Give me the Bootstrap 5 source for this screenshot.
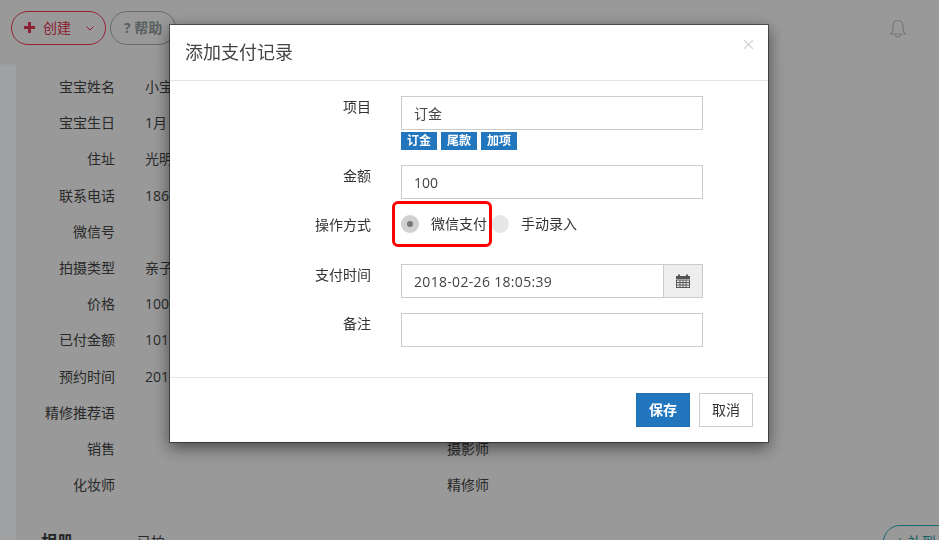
<!DOCTYPE html>
<html lang="zh-CN">
<head>
<meta charset="utf-8">
<title>添加支付记录</title>
<link rel="stylesheet" href="https://cdn.jsdelivr.net/npm/bootstrap@5.3.0/dist/css/bootstrap.min.css">
<style>
html, body { height: 100%; overflow: hidden; }
body { font-family: "Open Sans", "Noto Sans CJK SC", sans-serif; font-size: 14px; color: #333; background: #e5e7e9; }
.top-strip { height: 62px; background: #dcdcdc; padding: 11px 31px 0 11px; box-shadow: 0 1px 4px rgba(0,0,0,.12); position: relative; }
.pill { height: 34px; border-radius: 17px; background: transparent; display: flex; align-items: center; font-size: 14px; border: 1px solid; padding-bottom: 2px; }
.pill-create { width: 95px; border-color: #d5344f; color: #c8304a; padding-left: 12px; }
.pill-help { width: 66px; margin-left: 4px; border-color: #8e9a9a; color: #7f8a8a; padding-left: 13px; font-weight: 700; }
.pill-create .txt { margin-left: 8px; }
.pill-create svg.chev { margin-left: 15px; margin-top: 2px; }
.bell { margin-left: auto; margin-top: 8px; align-self: flex-start; }
.main-area { margin-left: 16px; background: #dbdbdb; height: 478px; position: relative; padding-top: 7px; color: #3c3c3c; }
.info-row { height: 36.2px; line-height: 36px; }
.info-key { width: 99px; text-align: right; flex: none; }
.info-val { margin-left: 30px; width: 100px; white-space: nowrap; }
.info-key2 { width: 143px; margin-left: 101px; text-align: right; flex: none; }
.album-row { position: relative; margin-top: 27px; }
.album-head { font-weight: 700; font-size: 16px; margin-left: 25px; color: #333; line-height: 22px; }
.album-sub { margin-left: 64px; line-height: 24px; }
.pill-teal { position: absolute; left: 867px; top: -5px; width: 80px; height: 34px; border: 1px solid #1f9aa0; border-radius: 17px; color: #1f8a90; padding: 0 12px; line-height: 32px; white-space: nowrap; }
.modal-backdrop-dim { background: rgba(0,0,0,.3); z-index: 1050; position: fixed; inset: 0; }
.pay-modal { z-index: 1055; overflow: hidden; }
.pay-dialog { width: 600px; max-width: 600px; margin: 24px 0 0 169px; }
.pay-content { border-radius: 0; border: 1px solid rgba(0,0,0,.45); box-shadow: 0 5px 15px rgba(0,0,0,.5); position: relative; color: #333; }
.pay-header { padding: 15px; height: 56px; border-bottom: 1px solid #e5e5e5; border-radius: 0; display: block; }
.pay-title { font-size: 18px; line-height: 25px; font-weight: 400; margin: 0; color: #444; }
.pay-close { position: absolute; right: 15px; top: 15px; font-size: 9px; width: 1em; height: 1em; padding: 0; opacity: .2; background-size: 1em; margin: 0; }
.pay-body { padding: 15px; }
.field-row { display: flex; margin-bottom: 15px; }
.field-label { width: 186px; flex: none; text-align: right; padding-top: 1px; line-height: 20px; margin: 0; }
.field-ctl { width: 302px; margin-left: 30px; flex: none; }
.pay-input { height: 34px; border: 1px solid #ccc; border-radius: 0; padding: 6px 12px; font-size: 14px; color: #444; box-shadow: none; }
.date-input { letter-spacing: .32px; }
.tag-list { display: flex; gap: 4px; margin-top: 2px; }
.tag-item { width: 36px; height: 18px; background: #2176bd; color: #fff; font-size: 12px; font-weight: 700; text-align: center; line-height: 18px; }
.radio-row { display: flex; align-items: center; height: 20px; margin-bottom: 15px; }
.radio-mark { width: 18px; height: 18px; border-radius: 50%; background: #e6e6e6; flex: none; display: flex; align-items: center; justify-content: center; }
.radio-on { background: #d0d0d0; }
.radio-on::after { content: ""; width: 6px; height: 6px; border-radius: 50%; background: #777; }
.radio-text { margin-left: 12px; white-space: nowrap; line-height: 20px; }
.radio-text.first { width: 60px; }
.date-group { height: 34px; }
.date-addon { width: 40px; padding: 0; justify-content: center; background: #eee; border: 1px solid #ccc; border-radius: 0; }
.pay-footer { padding: 15px; border-top: 1px solid #e5e5e5; border-radius: 0; gap: 9px; justify-content: flex-end; }
.pay-footer .btn { margin: 0; width: 54px; height: 34px; padding: 0; font-size: 14px; border-radius: 0; line-height: 32px; }
.btn-save { background: #2176bd; border: 1px solid #1f6fb2; color: #fff; font-weight: 700; }
.btn-cancel { background: #fff; border: 1px solid #ccc; color: #333; }
.red-note { position: absolute; left: 222px; top: 176px; width: 100px; height: 46px; border: 3px solid #f00; border-radius: 6px; pointer-events: none; }
</style>
</head>
<body>
<div class="top-strip d-flex">
  <div class="pill pill-create">
    <svg width="11" height="11" viewBox="0 0 11 11" aria-hidden="true"><path d="M4 0h3v4h4v3H7v4H4V7H0V4h4z" fill="#c8304a"/></svg>
    <span class="txt">创建</span>
    <svg class="chev" width="8" height="5" viewBox="0 0 8 5" aria-hidden="true"><path d="M.5.5 4 4 7.500.5" fill="none" stroke="#c8304a" stroke-width="1"/></svg>
  </div>
  <div class="pill pill-help">? 帮助</div>
  <svg class="bell" width="20" height="20" viewBox="0 0 20 20" aria-hidden="true"><path d="M10 1.500c-3.200 0-5 2.500-5 5.500v3.500c0 1.800-1 3.200-2.500 4.500h15c-1.500-1.300-2.500-2.700-2.500-4.500V7c0-3-1.800-5.500-5-5.500zM7.500 15.500c.2 1.700 1.200 2.500 2.500 2.500s2.300-.8 2.500-2.500" fill="none" stroke="#a9adb2" stroke-width="1.200"/></svg>
</div>
<div class="main-area">
  <div class="info-row d-flex"><div class="info-key">宝宝姓名</div><div class="info-val">小宝</div></div>
  <div class="info-row d-flex"><div class="info-key">宝宝生日</div><div class="info-val">1月</div></div>
  <div class="info-row d-flex"><div class="info-key">住址</div><div class="info-val">光明</div></div>
  <div class="info-row d-flex"><div class="info-key">联系电话</div><div class="info-val">186</div></div>
  <div class="info-row d-flex"><div class="info-key">微信号</div><div class="info-val"></div></div>
  <div class="info-row d-flex"><div class="info-key">拍摄类型</div><div class="info-val">亲子</div></div>
  <div class="info-row d-flex"><div class="info-key">价格</div><div class="info-val">100</div></div>
  <div class="info-row d-flex"><div class="info-key">已付金额</div><div class="info-val">101</div></div>
  <div class="info-row d-flex"><div class="info-key">预约时间</div><div class="info-val">201</div></div>
  <div class="info-row d-flex"><div class="info-key">精修推荐语</div><div class="info-val"></div></div>
  <div class="info-row d-flex"><div class="info-key">销售</div><div class="info-val"></div><div class="info-key2">摄影师</div></div>
  <div class="info-row d-flex"><div class="info-key">化妆师</div><div class="info-val"></div><div class="info-key2">精修师</div></div>
  <div class="album-row d-flex">
    <div class="album-head">相册</div><div class="album-sub">已拍</div>
    <div class="pill-teal">+ 补到</div>
  </div>
</div>

<div class="modal-backdrop-dim"></div>
<div class="modal d-block pay-modal">
  <div class="modal-dialog pay-dialog">
    <div class="modal-content pay-content">
      <div class="modal-header pay-header">
        <h5 class="modal-title pay-title">添加支付记录</h5>
        <button type="button" class="btn-close pay-close" aria-label="Close"></button>
      </div>
      <div class="modal-body pay-body">
        <div class="field-row">
          <label class="field-label">项目</label>
          <div class="field-ctl">
            <input class="form-control pay-input" value="订金">
            <div class="tag-list"><span class="tag-item">订金</span><span class="tag-item">尾款</span><span class="tag-item">加项</span></div>
          </div>
        </div>
        <div class="field-row">
          <label class="field-label">金额</label>
          <div class="field-ctl"><input class="form-control pay-input" value="100"></div>
        </div>
        <div class="field-row">
          <label class="field-label">操作方式</label>
          <div class="field-ctl">
            <div class="radio-row">
              <span class="radio-mark radio-on"></span><span class="radio-text first">微信支付</span>
              <span class="radio-mark"></span><span class="radio-text">手动录入</span>
            </div>
          </div>
        </div>
        <div class="field-row">
          <label class="field-label">支付时间</label>
          <div class="field-ctl">
            <div class="input-group date-group">
              <input class="form-control pay-input date-input" value="2018-02-26 18:05:39">
              <span class="input-group-text date-addon">
                <svg width="14" height="14" viewBox="0 0 14 14" aria-hidden="true"><path d="M0 2h2V.5h2V2h6V.5h2V2h2v3H0z" fill="#555"/><path fill-rule="evenodd" d="M0 5.500h14V14H0zM1 6.500v1.500h2.500V6.500zM4.500 6.500v1.500H6.500V6.500zM7.500 6.500v1.500h2V6.500zM10.500 6.500v1.500H13V6.500zM1 9v1.500h2.500V9zM4.500 9v1.500H6.500V9zM7.500 9v1.500h2V9zM10.500 9v1.500H13V9zM1 11.500V13h2.500v-1.500zM4.500 11.500V13H6.500v-1.500zM7.500 11.500V13h2v-1.500zM10.500 11.500V13H13v-1.500z" fill="#555"/></svg>
              </span>
            </div>
          </div>
        </div>
        <div class="field-row">
          <label class="field-label">备注</label>
          <div class="field-ctl"><input class="form-control pay-input"></div>
        </div>
      </div>
      <div class="modal-footer pay-footer">
        <button type="button" class="btn btn-save">保存</button>
        <button type="button" class="btn btn-cancel">取消</button>
      </div>
      <div class="red-note"></div>
    </div>
  </div>
</div>
</body>
</html>
